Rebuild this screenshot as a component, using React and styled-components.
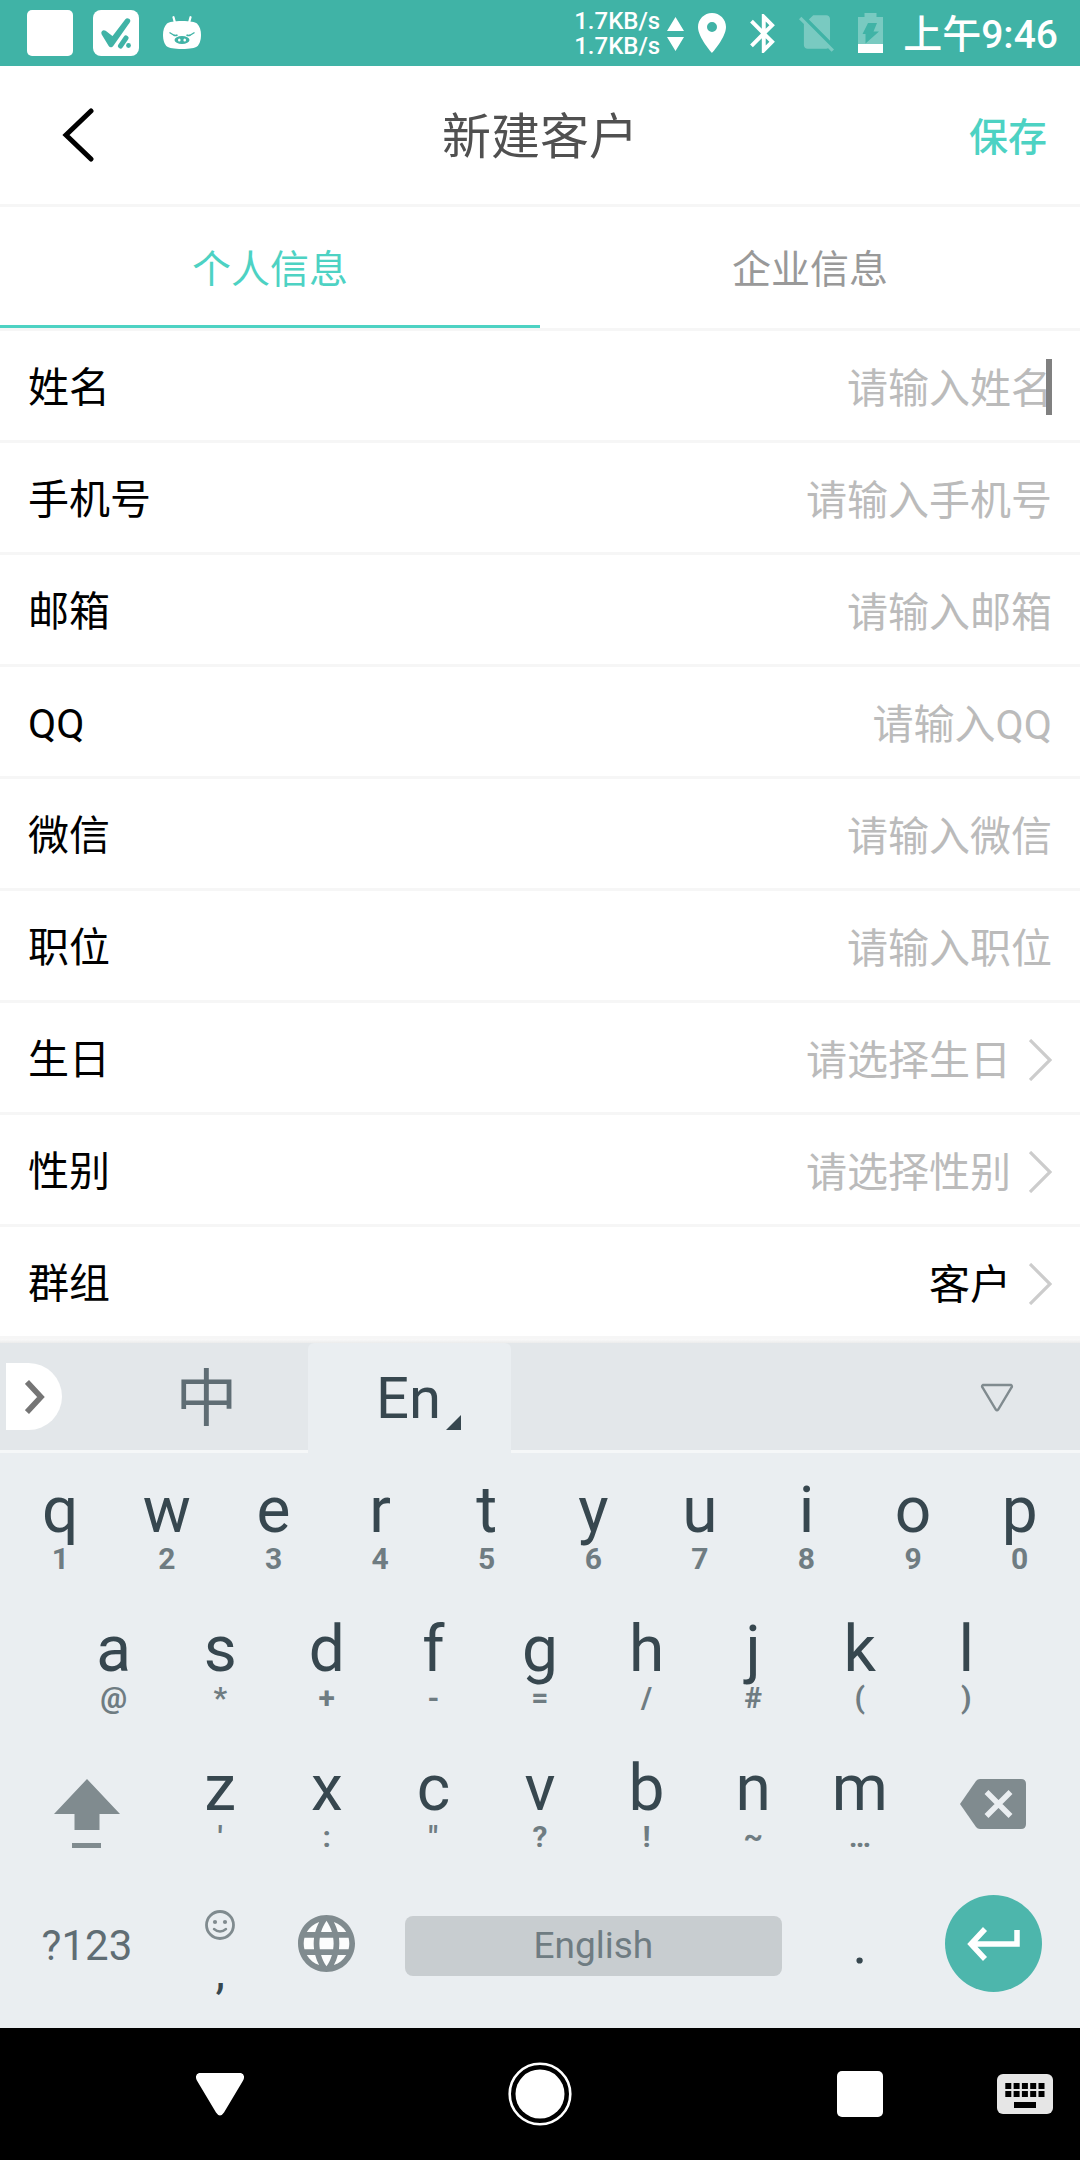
import React, { useState } from 'react';
import styled, { createGlobalStyle, css } from 'styled-components';

const color = {
  status: '#40b3a6',
  accent: '#4dd2c3',
  line: '#f6f6f6',
  title: '#505050',
  tab: '#999999',
  hint: '#bbbbbb',
  board: '#eaeef1',
  toolbar: '#e3e7ea',
  key: '#37474f',
  keySoft: '#5f6d74',
  keyHint: '#6f7c82',
  keyIcon: '#808b8f',
};

const GlobalStyle = createGlobalStyle`
  *, *::before, *::after { box-sizing: border-box; }
  body {
    margin: 0;
    background: #ffffff;
    font-family: Roboto, "Noto Sans CJK SC", sans-serif;
  }
  button, input, select {
    margin: 0;
    padding: 0;
    border: 0;
    background: none;
    color: inherit;
    font: inherit;
    outline: none;
  }
  svg { display: block; flex: none; }
`;

const Screen = styled.div`
  display: flex;
  flex-direction: column;
  min-height: 100vh;
`;

/* ---------- status bar ---------- */

const StatusBar = styled.div`
  display: flex;
  align-items: center;
  justify-content: space-between;
  height: 66px;
  padding: 0 22px 0 27px;
  background: ${color.status};
  color: #ffffff;
`;

const StatusApps = styled.div`
  display: flex;
  align-items: center;
  gap: 20px;
`;

const StatusInfo = styled.div`
  display: flex;
  align-items: center;
  gap: 24px;
`;

const NetSpeed = styled.div`
  display: flex;
  align-items: center;
  gap: 7px;
  margin-right: -10px;
  padding-top: 2px;
  font-size: 24px;
  font-weight: 500;
  line-height: 25px;
`;

const Clock = styled.time`
  margin-left: -4px;
  padding-top: 3px;
  font-size: 39px;
  font-weight: 500;
  line-height: 48px;
`;

/* ---------- page header ---------- */

const Header = styled.header`
  display: grid;
  grid-template-columns: 1fr auto 1fr;
  align-items: center;
  height: 141px;
  padding: 0 33px 0 62px;
  border-bottom: 3px solid ${color.line};
`;

const BackButton = styled.button`
  justify-self: start;
`;

const Title = styled.h1`
  margin: 0 0 0 -29px;
  padding-top: 5px;
  color: ${color.title};
  font-size: 49px;
  font-weight: 400;
  line-height: 64px;
`;

const SaveButton = styled.button`
  justify-self: end;
  padding-bottom: 3px;
  color: ${color.accent};
  font-size: 39px;
  font-weight: 500;
`;

const Tabs = styled.div`
  display: flex;
  height: 124px;
  border-bottom: 3px solid ${color.line};
`;

const Tab = styled.button`
  flex: 1;
  border-bottom: 3px solid ${(p) => (p.$active ? color.accent : 'transparent')};
  color: ${(p) => (p.$active ? color.accent : color.tab)};
  font-size: 39px;
`;

/* ---------- form ---------- */

const Row = styled.div`
  display: flex;
  align-items: center;
  height: 112px;
  padding: 4px 28px 0;
  border-bottom: 3px solid ${color.line};
  color: #000000;
  font-size: 41px;
  line-height: 60px;
`;

const Label = styled.label`
  flex: none;
`;

const Field = styled.div`
  position: relative;
  display: flex;
  flex: 1;
  min-width: 0;
  padding-top: 2px;
`;

const TextInput = styled.input`
  width: 100%;
  height: 60px;
  text-align: right;
  caret-color: transparent;

  &::placeholder {
    color: ${color.hint};
    opacity: 1;
  }
`;

const Caret = styled.span`
  position: absolute;
  top: 2px;
  right: 0;
  width: 6px;
  height: 56px;
  background: #808080;
`;

const pickerText = css`
  width: 100%;
  height: 60px;
  margin-right: 18px;
  color: ${(p) => (p.$empty ? color.hint : '#000000')};
`;

const PickerButton = styled.button`
  ${pickerText}
  text-align: right;
`;

const PickerSelect = styled.select`
  ${pickerText}
  appearance: none;
  text-align: right;
  text-align-last: right;
`;

/* ---------- keyboard ---------- */

const BoardEdge = styled.div`
  height: 4px;
  background: linear-gradient(#f9f9f9, #ececec);
`;

const Board = styled.section`
  background: ${color.board};
`;

const BoardBar = styled.div`
  display: flex;
  align-items: center;
  height: 110px;
  border-bottom: 3px solid #f5f7f8;
  background: ${color.toolbar};
`;

const ExpandSlot = styled.div`
  width: 105px;
  padding-left: 6px;
`;

const ExpandButton = styled.button`
  display: flex;
  align-items: center;
  width: 56px;
  height: 67px;
  padding-left: 19px;
  border-radius: 0 34px 34px 0;
  background: #ffffff;
`;

const LangTab = styled.button`
  position: relative;
  align-self: stretch;
  width: 203px;
  padding-top: 6px;
  color: ${color.keySoft};
  font-size: 62px;
  line-height: 64px;
  ${(p) =>
    p.$active &&
    css`
      margin-bottom: -3px;
      padding: 0 2px 0 0;
      border-radius: 6px 6px 0 0;
      background: ${color.board};
      color: ${color.key};
      font-size: 58px;
    `}
`;

const CornerMark = styled.svg`
  position: absolute;
  right: 50px;
  bottom: 23px;
`;

const HideButton = styled.button`
  margin-left: auto;
  padding: 2px 66px 0;
`;

const Keys = styled.div`
  padding: 6px 7px 13px;
`;

const KeyRow = styled.div`
  display: flex;
  height: 139px;
`;

const KeySpacer = styled.div`
  flex: 1 0 0;
`;

const Key = styled.button`
  display: flex;
  flex: ${(p) => p.$span || 2} 0 0;
  flex-direction: column;
  align-items: center;
  justify-content: flex-start;
  min-width: 0;
  padding-top: 20px;
`;

const Letter = styled.span`
  color: ${color.key};
  font-size: 64px;
  line-height: 64px;
`;

const Hint = styled.span`
  color: ${color.keyHint};
  font-size: 30px;
  font-weight: 700;
  line-height: 32px;
`;

const IconKey = styled(Key)`
  padding-top: 42px;
`;

const CenterKey = styled(Key)`
  justify-content: center;
  padding-top: 0;
  color: ${color.keySoft};
  font-size: 42px;
`;

const GlyphKey = styled(CenterKey)`
  padding-bottom: 4px;
`;

const DotKey = styled(CenterKey)`
  padding-bottom: 4px;
  color: ${color.key};
  font-size: 56px;
`;

const CommaKey = styled(Key)`
  padding-top: 34px;
  color: ${color.key};
  font-size: 48px;
  line-height: 64px;
`;

const SpaceSlot = styled.div`
  display: flex;
  flex: 8 0 0;
  align-items: center;
`;

const SpaceButton = styled.button`
  flex: 1;
  height: 60px;
  margin: 0 25px;
  border-radius: 8px;
  background: #c8cdd0;
  color: ${color.keyHint};
  font-size: 37px;
`;

const EnterDisc = styled.span`
  display: flex;
  align-items: center;
  justify-content: center;
  width: 97px;
  height: 97px;
  border-radius: 50%;
  background: #4db6ac;
`;

/* ---------- system navigation ---------- */

const NavBar = styled.nav`
  display: grid;
  grid-template-columns: 11fr 22fr 42fr 22fr 11fr;
  height: 132px;
  background: #000000;
`;

const NavButton = styled.button`
  display: flex;
  grid-column: ${(p) => p.$column};
  align-items: center;
  justify-content: center;
`;

/* ---------- drawings ---------- */

const BlankAppIcon = () => (
  <svg width="46" height="46" viewBox="0 0 46 46" aria-hidden="true">
    <rect width="46" height="46" rx="5" fill="#fff" />
  </svg>
);

const CheckAppIcon = () => (
  <svg width="46" height="46" viewBox="0 0 46 46" aria-hidden="true">
    <rect width="46" height="46" rx="8" fill="#fff" />
    <g stroke={color.status} strokeLinecap="round" strokeLinejoin="round" fill={color.status}>
      <path d="M11 23l7 11.5L34.5 11 20 30z" strokeWidth="5.4" />
      <path d="M33 28l-5.5 8" strokeWidth="5" />
      <circle cx="35.5" cy="35.5" r="2.4" stroke="none" />
    </g>
  </svg>
);

const PigIcon = () => (
  <svg width="46" height="34" viewBox="-4 0 46 34" aria-hidden="true">
    <path d="M10.5 1.2l1.6 6M27.5 1.2l-1.6 6" stroke="#fff" strokeWidth="2.2" strokeLinecap="round" />
    <path d="M19 5c8 0 13 1 15 2.5 3 3 4 7 4 11.5 0 5-1.5 9.5-4 11.5C32 32 27 33 19 33S6 32 4 30.5C1.5 28.5 0 24 0 19 0 14.5 1 10.5 4 7.5 6 6 11 5 19 5z" fill="#fff" />
    <path d="M6.500 16.500l4 2.500q2 1 4 0M31.500 16.500l-4 2.500q-2 1-4 0" fill="none" stroke={color.status} strokeWidth="1.4" />
    <ellipse cx="19" cy="24" rx="7.5" ry="4" fill={color.status} />
    <ellipse cx="16.3" cy="24" rx="1.3" ry="1.5" fill="#fff" />
    <ellipse cx="21.7" cy="24" rx="1.3" ry="1.5" fill="#fff" />
  </svg>
);

const SpeedArrows = () => (
  <svg width="17" height="34" viewBox="0 0 17 34" fill="#fff" aria-hidden="true">
    <path d="M8.5 0L17 14H0zM0 20h17L8.5 34z" />
  </svg>
);

const PinIcon = () => (
  <svg width="28" height="40" viewBox="5 2 14 20" fill="#fff" aria-hidden="true">
    <path d="M12 2C8.13 2 5 5.13 5 9c0 5.25 7 13 7 13s7-7.75 7-13c0-3.87-3.13-7-7-7zm0 9.5a2.5 2.5 0 0 1 0-5 2.5 2.5 0 0 1 0 5z" />
  </svg>
);

const BluetoothIcon = () => (
  <svg width="25" height="39" viewBox="5 2 12.71 20" fill="#fff" aria-hidden="true">
    <path d="M17.71 7.71L12 2h-1v7.59L6.41 5 5 6.41 10.59 12 5 17.59 6.41 19 11 14.41V22h1l5.71-5.71-4.3-4.29 4.3-4.29zM13 5.83l1.88 1.88L13 9.59V5.83zm1.88 10.46L13 18.17v-3.76l1.88 1.88z" />
  </svg>
);

const NoSimIcon = () => (
  <svg width="35" height="37" viewBox="2.38 3 18.74 19.62" fill="#fff" fillOpacity="0.3" aria-hidden="true">
    <path d="M18.99 5c0-1.1-.89-2-1.99-2h-7L7.66 5.34 19 16.68 18.99 5zM3.65 3.88L2.38 5.15 5 7.77V19c0 1.1.9 2 2 2h10.01c.35 0 .67-.1.96-.26l1.88 1.88 1.27-1.27L3.65 3.88z" />
  </svg>
);

const BatteryIcon = () => (
  <svg width="25" height="40" viewBox="0 0 25 40" aria-hidden="true">
    <path d="M6.5 0h12v4H25v27H0V4h6.5z" fill="#fff" fillOpacity="0.3" />
    <path d="M0 31h25v9H0z" fill="#fff" />
    <path d="M10 10h9l-3.5 8.500H21L7.5 30.500V21H4.500z" fill={color.status} />
  </svg>
);

const BackIcon = () => (
  <svg width="32" height="54" viewBox="0 0 32 54" fill="none" aria-hidden="true">
    <path d="M29 3L4 27l25 24" stroke="#000" strokeWidth="5" strokeLinecap="round" />
  </svg>
);

const ChevronIcon = () => (
  <svg width="23" height="42" viewBox="0 0 23 42" fill="none" aria-hidden="true">
    <path d="M1 1l20 20L1 41" stroke="#cccccc" strokeWidth="3.2" />
  </svg>
);

const ExpandIcon = () => (
  <svg width="20" height="34" viewBox="0 0 20 34" fill="none" aria-hidden="true">
    <path d="M2 2l14 15L2 32" stroke="#757575" strokeWidth="5.5" />
  </svg>
);

const HideIcon = () => (
  <svg width="34" height="30" viewBox="0 0 34 30" fill="none" aria-hidden="true">
    <path d="M3 2h28q1.5 1 .5 2.5L18.2 26.500q-1.2 1.500-2.4 0L2.500 4.500Q1.500 3 3 2z" stroke={color.keyIcon} strokeWidth="2.4" />
  </svg>
);

const ShiftIcon = () => (
  <svg width="66" height="70" viewBox="0 0 66 70" fill={color.keyIcon} aria-hidden="true">
    <path d="M33 0l33 35H45.5v16h-25V35H0zM18 64h29v5H18z" />
  </svg>
);

const BackspaceIcon = () => (
  <svg width="66" height="50" viewBox="0 0 66 50" fill="none" aria-hidden="true">
    <path d="M20 0h41q5 0 5 5v40q0 5-5 5H20q-2.5 0-4-2L0 25 16 2q1.5-2 4-2z" fill={color.keyIcon} />
    <path d="M26.5 13L50.5 37M50.5 13L26.5 37" stroke={color.board} strokeWidth="5.5" />
  </svg>
);

const SmileIcon = () => (
  <svg width="30" height="30" viewBox="0 0 30 30" fill="none" aria-hidden="true">
    <circle cx="15" cy="15" r="13.5" stroke={color.keyIcon} strokeWidth="2.8" />
    <circle cx="10" cy="12" r="2.1" fill={color.keyIcon} />
    <circle cx="20" cy="12" r="2.1" fill={color.keyIcon} />
    <path d="M9 19q6 5 12 0" stroke={color.keyIcon} strokeWidth="2.4" strokeLinecap="round" />
  </svg>
);

const GlobeIcon = () => (
  <svg width="57" height="57" viewBox="2 2 20 20" aria-hidden="true">
    <circle cx="12" cy="12" r="9.5" fill="#fcfdfd" />
    <path
      fill={color.keyIcon}
      d="M11.99 2C6.47 2 2 6.48 2 12s4.47 10 9.99 10C17.52 22 22 17.52 22 12S17.52 2 11.99 2zm6.93 6h-2.95c-.32-1.25-.78-2.45-1.38-3.56 1.84.63 3.37 1.91 4.33 3.56zM12 4.04c.83 1.2 1.48 2.53 1.91 3.96h-3.82c.43-1.43 1.08-2.76 1.91-3.96zM4.26 14C4.1 13.36 4 12.69 4 12s.1-1.36.26-2h3.38c-.08.66-.14 1.32-.14 2 0 .68.06 1.34.14 2H4.26zm.82 2h2.95c.32 1.25.78 2.45 1.38 3.56-1.84-.63-3.37-1.9-4.33-3.56zm2.95-8H5.08c.96-1.66 2.49-2.93 4.33-3.56C8.81 5.55 8.35 6.75 8.03 8zM12 19.96c-.83-1.2-1.48-2.53-1.91-3.96h3.82c-.43 1.43-1.08 2.76-1.91 3.96zM14.34 14H9.66c-.09-.66-.16-1.32-.16-2 0-.68.07-1.35.16-2h4.68c.09.65.16 1.32.16 2 0 .68-.07 1.34-.16 2zm.25 5.56c.6-1.11 1.06-2.31 1.38-3.56h2.95c-.96 1.65-2.49 2.93-4.33 3.56zM16.36 14c.08-.66.14-1.32.14-2 0-.68-.06-1.34-.14-2h3.38c.16.64.26 1.31.26 2s-.1 1.36-.26 2h-3.38z"
    />
  </svg>
);

const EnterIcon = () => (
  <svg width="53" height="34" viewBox="0 0 53 34" fill="none" aria-hidden="true">
    <path d="M18 2L4 17l14 15M4 17h46V3" stroke="#fff" strokeWidth="5.5" />
  </svg>
);

const NavBackIcon = () => (
  <svg width="48" height="43" viewBox="0 0 48 43" fill="#fff" aria-hidden="true">
    <path d="M3 0h42q3.500 1 3 5-.3 1.800-1.500 3.500L28 39.500q-4 6-8 0L1.500 8.500Q.3 6.800 0 5-.5 1 3 0z" />
  </svg>
);

const NavHomeIcon = () => (
  <svg width="64" height="64" viewBox="0 0 64 64" fill="none" aria-hidden="true">
    <circle cx="32" cy="32" r="30.3" stroke="#fff" strokeWidth="2.6" />
    <circle cx="32" cy="32" r="24.5" fill="#fff" />
  </svg>
);

const NavRecentIcon = () => (
  <svg width="46" height="46" viewBox="0 0 46 46" aria-hidden="true">
    <rect width="46" height="46" rx="5" fill="#fff" />
  </svg>
);

const NavKeyboardIcon = () => (
  <svg width="56" height="40" viewBox="0 0 56 40" aria-hidden="true">
    <rect width="56" height="40" rx="6" fill="#e6e6e6" />
    {[9, 17].map((y) =>
      [0, 1, 2, 3, 4].map((i) => (
        <rect key={`${y}-${i}`} x={8.3 + i * 8.3} y={y} width="6" height="6" fill="#000" />
      )),
    )}
    <rect x="17" y="28" width="22" height="6" fill="#000" />
  </svg>
);

/* ---------- data ---------- */

const textFields = [
  { id: 'name', label: '姓名', placeholder: '请输入姓名', focused: true },
  { id: 'phone', label: '手机号', placeholder: '请输入手机号' },
  { id: 'email', label: '邮箱', placeholder: '请输入邮箱' },
  { id: 'qq', label: 'QQ', placeholder: '请输入QQ' },
  { id: 'wechat', label: '微信', placeholder: '请输入微信' },
  { id: 'position', label: '职位', placeholder: '请输入职位' },
];

const topKeys = ['q1', 'w2', 'e3', 'r4', 't5', 'y6', 'u7', 'i8', 'o9', 'p0'];
const homeKeys = ['a@', 's*', 'd+', 'f-', 'g=', 'h/', 'j#', 'k(', 'l)'];
const lowKeys = ["z'", 'x:', 'c"', 'v?', 'b!', 'n~', 'm…'];

const renderKeys = (keys) =>
  keys.map((pair) => (
    <Key key={pair} type="button">
      <Letter>{pair[0]}</Letter>
      <Hint>{pair[1]}</Hint>
    </Key>
  ));

export default function App() {
  const [tab, setTab] = useState('person');

  return (
    <>
      <GlobalStyle />
      <Screen>
        <StatusBar>
          <StatusApps>
            <BlankAppIcon />
            <CheckAppIcon />
            <PigIcon />
          </StatusApps>
          <StatusInfo>
            <NetSpeed>
              <div>
                <div>1.7KB/s</div>
                <div>1.7KB/s</div>
              </div>
              <SpeedArrows />
            </NetSpeed>
            <PinIcon />
            <BluetoothIcon />
            <NoSimIcon />
            <BatteryIcon />
            <Clock>上午9:46</Clock>
          </StatusInfo>
        </StatusBar>

        <Header>
          <BackButton type="button" aria-label="返回">
            <BackIcon />
          </BackButton>
          <Title>新建客户</Title>
          <SaveButton type="submit" form="customer">保存</SaveButton>
        </Header>

        <Tabs role="tablist">
          <Tab type="button" role="tab" aria-selected={tab === 'person'} $active={tab === 'person'} onClick={() => setTab('person')}>
            个人信息
          </Tab>
          <Tab type="button" role="tab" aria-selected={tab === 'company'} $active={tab === 'company'} onClick={() => setTab('company')}>
            企业信息
          </Tab>
        </Tabs>

        <form id="customer" onSubmit={(e) => e.preventDefault()}>
          {textFields.map((f) => (
            <Row key={f.id}>
              <Label htmlFor={f.id}>{f.label}</Label>
              <Field>
                <TextInput id={f.id} type="text" placeholder={f.placeholder} />
                {f.focused && <Caret />}
              </Field>
            </Row>
          ))}
          <Row>
            <Label htmlFor="birthday">生日</Label>
            <Field>
              <PickerButton id="birthday" type="button" $empty>请选择生日</PickerButton>
            </Field>
            <ChevronIcon />
          </Row>
          <Row>
            <Label htmlFor="gender">性别</Label>
            <Field>
              <PickerSelect id="gender" $empty defaultValue="">
                <option value="">请选择性别</option>
              </PickerSelect>
            </Field>
            <ChevronIcon />
          </Row>
          <Row>
            <Label htmlFor="group">群组</Label>
            <Field>
              <PickerSelect id="group" defaultValue="customer">
                <option value="customer">客户</option>
              </PickerSelect>
            </Field>
            <ChevronIcon />
          </Row>
        </form>

        <BoardEdge />
        <Board>
          <BoardBar>
            <ExpandSlot>
              <ExpandButton type="button" aria-label="展开">
                <ExpandIcon />
              </ExpandButton>
            </ExpandSlot>
            <LangTab type="button">中</LangTab>
            <LangTab type="button" $active>
              En
              <CornerMark width="15" height="15" viewBox="0 0 15 15" fill={color.key} aria-hidden="true">
                <path d="M15 0v15H0z" />
              </CornerMark>
            </LangTab>
            <HideButton type="button" aria-label="收起键盘">
              <HideIcon />
            </HideButton>
          </BoardBar>
          <Keys>
            <KeyRow>{renderKeys(topKeys)}</KeyRow>
            <KeyRow>
              <KeySpacer />
              {renderKeys(homeKeys)}
              <KeySpacer />
            </KeyRow>
            <KeyRow>
              <IconKey type="button" $span={3} aria-label="Shift">
                <ShiftIcon />
              </IconKey>
              {renderKeys(lowKeys)}
              <IconKey type="button" $span={3} aria-label="Backspace">
                <BackspaceIcon />
              </IconKey>
            </KeyRow>
            <KeyRow>
              <CenterKey type="button" $span={3}>?123</CenterKey>
              <CommaKey type="button">
                <SmileIcon />
                <span>,</span>
              </CommaKey>
              <GlyphKey type="button" aria-label="Language">
                <GlobeIcon />
              </GlyphKey>
              <SpaceSlot>
                <SpaceButton type="button">English</SpaceButton>
              </SpaceSlot>
              <DotKey type="button">.</DotKey>
              <GlyphKey type="button" $span={3} aria-label="Enter">
                <EnterDisc>
                  <EnterIcon />
                </EnterDisc>
              </GlyphKey>
            </KeyRow>
          </Keys>
        </Board>

        <NavBar>
          <NavButton type="button" $column={2} aria-label="Back">
            <NavBackIcon />
          </NavButton>
          <NavButton type="button" $column={3} aria-label="Home">
            <NavHomeIcon />
          </NavButton>
          <NavButton type="button" $column={4} aria-label="Recent">
            <NavRecentIcon />
          </NavButton>
          <NavButton type="button" $column={5} aria-label="Keyboard">
            <NavKeyboardIcon />
          </NavButton>
        </NavBar>
      </Screen>
    </>
  );
}
